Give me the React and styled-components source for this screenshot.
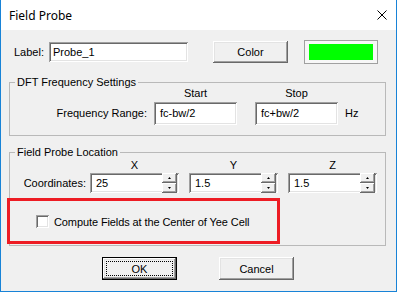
import React from "react";
import styled, { createGlobalStyle } from "styled-components";

const Global = createGlobalStyle`
  html, body { margin: 0; padding: 0; background: #f0f0f0; }
  body {
    font-family: "Liberation Sans", Arial, sans-serif;
    font-size: 11px;
    color: #000;
  }
`;

const Window = styled.div`
  box-sizing: border-box;
  width: 397px;
  height: 292px;
  border: 1px solid #1883d7;
  border-top: 0;
  background: #f0f0f0;
  display: flex;
  flex-direction: column;
`;

const TitleBar = styled.div`
  flex: none;
  height: 30px;
  background: #fff;
  display: flex;
  align-items: center;
  justify-content: space-between;
  padding: 0 9px 0 8px;
`;

const Title = styled.div`
  font-family: "Noto Sans", "Liberation Sans", sans-serif;
  font-size: 12px;
  color: #000;
`;

const CloseIcon = styled.svg`
  width: 10px;
  height: 10px;
  display: block;
`;

const Body = styled.div`
  display: flex;
  flex-direction: column;
  padding: 10px 10px 0 8px;
`;

const TopRow = styled.div`
  display: flex;
  align-items: center;
  height: 24px;
  padding-left: 5px;
`;

const FieldLabel = styled.span`
  flex: none;
  width: 35px;
`;

const Sunken = styled.div`
  box-sizing: border-box;
  flex: none;
  width: ${(p) => p.$w}px;
  height: ${(p) => p.$h}px;
  background: #fff;
  box-shadow: inset 1px 1px #a0a0a0, inset -1px -1px #fff,
    inset 2px 2px #696969, inset -2px -2px #e3e3e3;
  display: flex;
  align-items: center;
  padding-left: ${(p) => p.$pl ?? 4}px;
  position: relative;
`;

const Button = styled.button`
  box-sizing: border-box;
  flex: none;
  position: relative;
  width: 75px;
  height: ${(p) => p.$h}px;
  margin-left: ${(p) => p.$ml || 0}px;
  padding: 0;
  font: inherit;
  color: #000;
  background: #f0f0f0;
  border: ${(p) => (p.$default ? "1px solid #000" : "0")};
  box-shadow: inset -1px -1px #696969, inset 1px 1px #fff,
    inset -2px -2px #a0a0a0, inset 2px 2px #e3e3e3;
  &::after {
    content: "";
    display: ${(p) => (p.$default ? "block" : "none")};
    position: absolute;
    inset: 3px;
    border: 1px dotted #000;
  }
`;

const Swatch = styled.div`
  box-sizing: border-box;
  flex: none;
  margin-left: 16px;
  width: 74px;
  height: 24px;
  border: 1px solid #a0a0a0;
  background: #f7f7f7;
  padding: 3px 4px;
  display: flex;
`;

const SwatchFill = styled.div`
  flex: 1;
  background: ${(p) => p.$color};
`;

const Group = styled.div`
  box-sizing: border-box;
  position: relative;
  width: 377px;
  margin-top: ${(p) => p.$mt}px;
  border: 1px solid #b9b9b9;
`;

const Legend = styled.span`
  position: absolute;
  top: -7px;
  left: 5px;
  padding: 0 2px;
  line-height: 13px;
  background: #f0f0f0;
`;

const FreqGrid = styled.div`
  display: grid;
  grid-template-columns: 144px 83px 18px 83px 7px auto;
  grid-template-rows: 13px 23px;
  row-gap: 2px;
  padding: 4px 0 10px;
  align-items: center;
`;

const CoordGrid = styled.div`
  display: grid;
  grid-template-columns: 80px 89px 10px 89px 10px 89px;
  grid-template-rows: 13px 20px;
  row-gap: 1px;
  padding-top: 6px;
  align-items: center;
`;

const Cell = styled.div`
  grid-column: ${(p) => p.$col};
  grid-row: ${(p) => p.$row};
  text-align: ${(p) => p.$align || "left"};
  padding-right: ${(p) => p.$pr || 0}px;
  line-height: 13px;
`;

const SpinButtons = styled.div`
  position: absolute;
  right: 2px;
  top: 0;
  bottom: 0;
  width: 15px;
  display: flex;
  flex-direction: column;
`;

const SpinButton = styled.div`
  flex: 1;
  background: #f0f0f0;
  box-shadow: inset -1px -1px #696969, inset 1px 1px #fff,
    inset -2px -2px #a0a0a0;
  display: flex;
  align-items: center;
  justify-content: center;
`;

const Arrow = styled.svg`
  width: 3px;
  height: 2px;
  display: block;
  transform: ${(p) => (p.$down ? "rotate(180deg)" : "none")};
`;

const CheckRow = styled.div`
  display: flex;
  align-items: center;
  height: 15px;
  margin-top: 21px;
  margin-bottom: 16px;
  padding-left: 26px;
  gap: 5px;
`;

const CheckBox = styled.div`
  box-sizing: border-box;
  width: 13px;
  height: 13px;
  background: #fff;
  box-shadow: inset 1px 1px #a0a0a0, inset -1px -1px #fff,
    inset 2px 2px #696969, inset -2px -2px #e3e3e3;
`;

const CheckText = styled.span`
  letter-spacing: -0.1px;
`;

const Highlight = styled.div`
  box-sizing: border-box;
  position: absolute;
  left: -3px;
  top: 45px;
  width: 273px;
  height: 46px;
  border: 3px solid #ed1c24;
  pointer-events: none;
`;

const ButtonRow = styled.div`
  display: flex;
  margin-top: 11px;
  padding-left: 93px;
  gap: 42px;
`;

function Spin({ value, col }) {
  return (
    <Cell $col={col} $row={2}>
      <Sunken $w={89} $h={20} $pl={6}>
        {value}
        <SpinButtons>
          <SpinButton>
            <Arrow viewBox="0 0 3 2">
              <polygon points="1.5,0 3,2 0,2" fill="#000" />
            </Arrow>
          </SpinButton>
          <SpinButton>
            <Arrow viewBox="0 0 3 2" $down>
              <polygon points="1.5,0 3,2 0,2" fill="#000" />
            </Arrow>
          </SpinButton>
        </SpinButtons>
      </Sunken>
    </Cell>
  );
}

export default function App() {
  return (
    <>
      <Global />
      <Window>
        <TitleBar>
          <Title>Field Probe</Title>
          <CloseIcon viewBox="0 0 10 10">
            <path d="M0.5 0.5 L9.5 9.5 M9.5 0.5 L0.5 9.5" stroke="#000" strokeWidth="1" />
          </CloseIcon>
        </TitleBar>
        <Body>
          <TopRow>
            <FieldLabel>Label:</FieldLabel>
            <Sunken $w={139} $h={20}>Probe_1</Sunken>
            <Button $h={22} $ml={25}>Color</Button>
            <Swatch>
              <SwatchFill $color="#00ff00" />
            </Swatch>
          </TopRow>

          <Group $mt={18}>
            <Legend>DFT Frequency Settings</Legend>
            <FreqGrid>
              <Cell $col={2} $row={1} $align="center">Start</Cell>
              <Cell $col={4} $row={1} $align="center">Stop</Cell>
              <Cell $col={1} $row={2} $align="right" $pr={7}>Frequency Range:</Cell>
              <Cell $col={2} $row={2}>
                <Sunken $w={83} $h={23} $pl={6}>fc-bw/2</Sunken>
              </Cell>
              <Cell $col={4} $row={2}>
                <Sunken $w={83} $h={23} $pl={6}>fc+bw/2</Sunken>
              </Cell>
              <Cell $col={6} $row={2}>Hz</Cell>
            </FreqGrid>
          </Group>

          <Group $mt={16}>
            <Legend>Field Probe Location</Legend>
            <CoordGrid>
              <Cell $col={2} $row={1} $align="center">X</Cell>
              <Cell $col={4} $row={1} $align="center">Y</Cell>
              <Cell $col={6} $row={1} $align="center">Z</Cell>
              <Cell $col={1} $row={2} $align="right" $pr={4}>Coordinates:</Cell>
              <Spin col={2} value="25" />
              <Spin col={4} value="1.5" />
              <Spin col={6} value="1.5" />
            </CoordGrid>
            <CheckRow>
              <CheckBox />
              <CheckText>Compute Fields at the Center of Yee Cell</CheckText>
            </CheckRow>
            <Highlight />
          </Group>

          <ButtonRow>
            <Button $h={23} $default>OK</Button>
            <Button $h={23}>Cancel</Button>
          </ButtonRow>
        </Body>
      </Window>
    </>
  );
}
